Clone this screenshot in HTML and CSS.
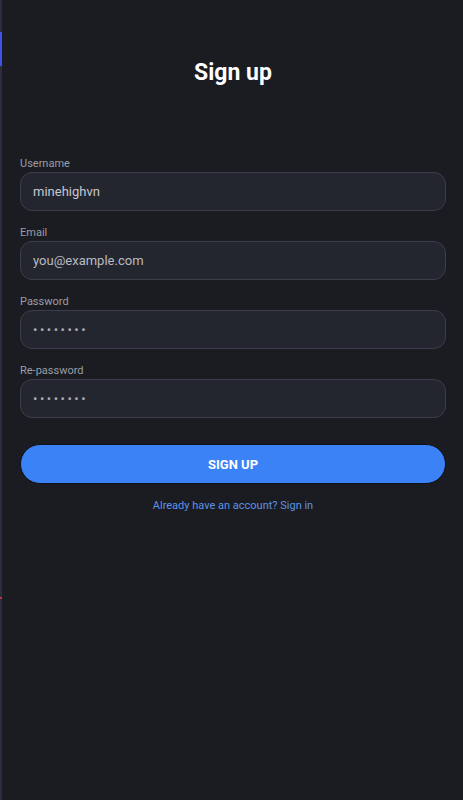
FILE: index.html
```html
<!DOCTYPE html>
<html lang="en">
<head>
<meta charset="utf-8">
<title>Sign up</title>
<link rel="stylesheet" href="styles.css">
</head>
<body>
<div class="app">
  <aside class="rail">
    <span class="rail-active"></span>
    <span class="rail-dot"></span>
  </aside>
  <main class="page">
    <h1 class="title">Sign up</h1>
    <form class="form">
      <label class="field">
        <span class="label">Username</span>
        <input class="input" type="text" value="minehighvn">
      </label>
      <label class="field">
        <span class="label">Email</span>
        <input class="input" type="email" placeholder="you@example.com">
      </label>
      <label class="field">
        <span class="label">Password</span>
        <input class="input pw" type="password" value="12345678">
      </label>
      <label class="field">
        <span class="label">Re-password</span>
        <input class="input pw" type="password" value="12345678">
      </label>
      <button class="btn" type="button">SIGN UP</button>
      <a class="link" href="#">Already have an account? Sign in</a>
    </form>
  </main>
</div>
</body>
</html>
```

FILE: styles.css
```css
* { box-sizing: border-box; }
html, body { margin: 0; padding: 0; height: 100%; }
body {
  background: #1b1c21;
  font-family: Roboto, "Liberation Sans", sans-serif;
  color: #e5e7eb;
}
.app {
  display: flex;
  min-height: 100vh;
}
.rail {
  position: relative;
  width: 2px;
  flex: 0 0 2px;
  background: #2c2c3c;
}
.rail-active {
  position: absolute;
  left: 0;
  top: 32px;
  width: 2px;
  height: 34px;
  background: #3f51e8;
}
.rail-dot {
  position: absolute;
  left: 0;
  top: 597px;
  width: 2px;
  height: 2px;
  background: #c0304a;
}
.page {
  flex: 1;
  padding: 58px 17px 0 18px;
}
.title {
  margin: 0;
  text-align: center;
  font-size: 23px;
  font-weight: 700;
  color: #ffffff;
  line-height: 30px;
}
.form {
  display: flex;
  flex-direction: column;
  margin-top: 69px;
}
.field {
  display: flex;
  flex-direction: column;
  margin-bottom: 15px;
}
.label {
  font-size: 11px;
  line-height: 13px;
  color: #9a9ca6;
  margin-bottom: 2px;
}
.input {
  height: 39px;
  border: 1px solid #3a3d4b;
  border-radius: 12px;
  background: #24262f;
  color: #c7c9d1;
  font-family: Roboto, "Liberation Sans", sans-serif;
  font-size: 13px;
  padding: 0 12px;
  outline: none;
}
.input::placeholder { color: #b8bac2; opacity: 1; }
.pw {
  letter-spacing: 2.5px;
  color: #a8aab3;
}
.btn {
  margin-top: 11px;
  height: 40px;
  border: 1px solid #0e1016;
  border-radius: 20px;
  background: #3b82f6;
  color: #ffffff;
  font-family: Roboto, "Liberation Sans", sans-serif;
  font-size: 13px;
  font-weight: 700;
  cursor: pointer;
}
.link {
  margin-top: 15px;
  text-align: center;
  font-size: 11px;
  line-height: 13px;
  color: #5b93e6;
  text-decoration: none;
}
```
